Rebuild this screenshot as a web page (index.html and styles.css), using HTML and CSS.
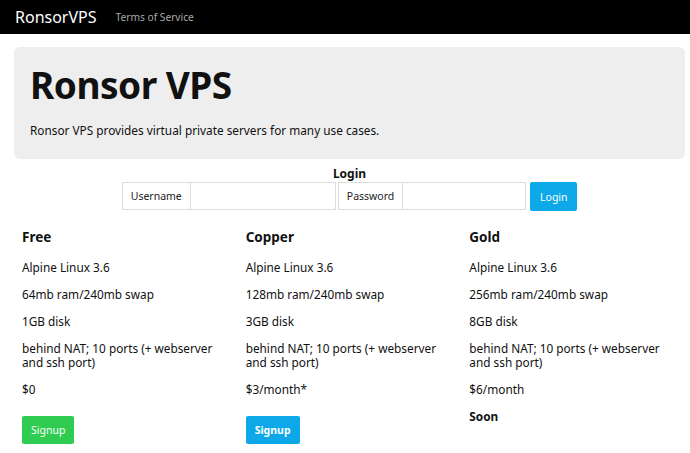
FILE: index.html
```html
<!DOCTYPE html>
<html>
<head>
<meta charset="utf-8">
<link rel="stylesheet" href="styles.css">
</head>
<body>
<nav class="navbar">
  <a class="brand">RonsorVPS</a>
  <a class="nav-link">Terms of Service</a>
</nav>
<main class="container">
  <section class="jumbotron">
    <h1>Ronsor VPS</h1>
    <p>Ronsor VPS provides virtual private servers for many use cases.</p>
  </section>
  <form class="login">
    <div class="login-title">Login</div>
    <div class="login-row">
      <div class="group">
        <span class="addon">Username</span>
        <span class="field user"></span>
      </div>
      <div class="group">
        <span class="addon">Password</span>
        <span class="field pass"></span>
      </div>
      <button type="button" class="btn btn-blue">Login</button>
    </div>
  </form>
  <div class="plans">
    <div class="plan">
      <h3>Free</h3>
      <p>Alpine Linux 3.6</p>
      <p>64mb ram/240mb swap</p>
      <p>1GB disk</p>
      <p>behind NAT; 10 ports (+ webserver and ssh port)</p>
      <p>$0</p>
      <button type="button" class="btn btn-green">Signup</button>
    </div>
    <div class="plan">
      <h3>Copper</h3>
      <p>Alpine Linux 3.6</p>
      <p>128mb ram/240mb swap</p>
      <p>3GB disk</p>
      <p>behind NAT; 10 ports (+ webserver and ssh port)</p>
      <p>$3/month*</p>
      <button type="button" class="btn btn-blue bold">Signup</button>
    </div>
    <div class="plan">
      <h3>Gold</h3>
      <p>Alpine Linux 3.6</p>
      <p>256mb ram/240mb swap</p>
      <p>8GB disk</p>
      <p>behind NAT; 10 ports (+ webserver and ssh port)</p>
      <p>$6/month</p>
      <p class="soon">Soon</p>
    </div>
  </div>
</main>
</body>
</html>
```
FILE: styles.css
```css
* { box-sizing: border-box; }
body {
  margin: 0;
  font-family: "Noto Sans", "Open Sans", sans-serif;
  font-size: 11.8px;
  color: #111;
  background: #fff;
}
.navbar {
  height: 34px;
  background: #000;
  display: flex;
  align-items: center;
  padding: 0 15px;
}
.brand {
  color: #fff;
  font-size: 16px;
  margin-right: 19px;
}
.nav-link {
  color: #aaa;
  font-size: 10.2px;
}
.container {
  padding: 13px 5px 0 14px;
}
.jumbotron {
  background: #eeeeee;
  border-radius: 6px;
  padding: 16px 16px 22px;
  height: 112px;
}
.jumbotron h1 {
  margin: 0;
  font-size: 37px;
  font-weight: 700;
  line-height: 44px;
  letter-spacing: -0.5px;
}
.jumbotron p {
  margin: 15px 0 0;
  font-size: 11.8px;
}
.login {
  display: flex;
  flex-direction: column;
  align-items: center;
  margin-top: 7px;
}
.login-title {
  font-weight: 700;
  font-size: 12px;
  line-height: 16px;
}
.login-row {
  display: flex;
  gap: 2px;
  margin-top: 0;
  align-items: stretch;
}
.group {
  display: flex;
  height: 28px;
  border: 1px solid #ddd;
}
.addon {
  display: flex;
  align-items: center;
  padding: 0 8px;
  font-size: 10.5px;
  border-right: 1px solid #ddd;
  color: #222;
}
.field { display: block; }
.field.user { width: 144px; }
.field.pass { width: 122px; }
.btn {
  border: none;
  border-radius: 2px;
  color: #fff;
  font-family: inherit;
  font-size: 10.5px;
  padding: 0 9px;
  height: 29px;
}
.login .btn { margin-left: 2px; width: 47px; }
.btn-blue { background: #0ca8e8; }
.btn-green { background: #2ecc50; }
.bold { font-weight: 700; }
.plans {
  display: flex;
  margin-top: 16px;
}
.plan {
  flex: 1;
  padding: 0 8px;
}
.plan h3 {
  margin: 0 0 13px;
  font-size: 13.5px;
  line-height: 20px;
}
.plan p {
  margin: 0 0 13px;
  line-height: 14px;
}
.plan .btn {
  height: 28px;
  padding: 0 9px;
  margin-top: 7px;
}
.plan .soon {
  font-weight: 700;
}
```
